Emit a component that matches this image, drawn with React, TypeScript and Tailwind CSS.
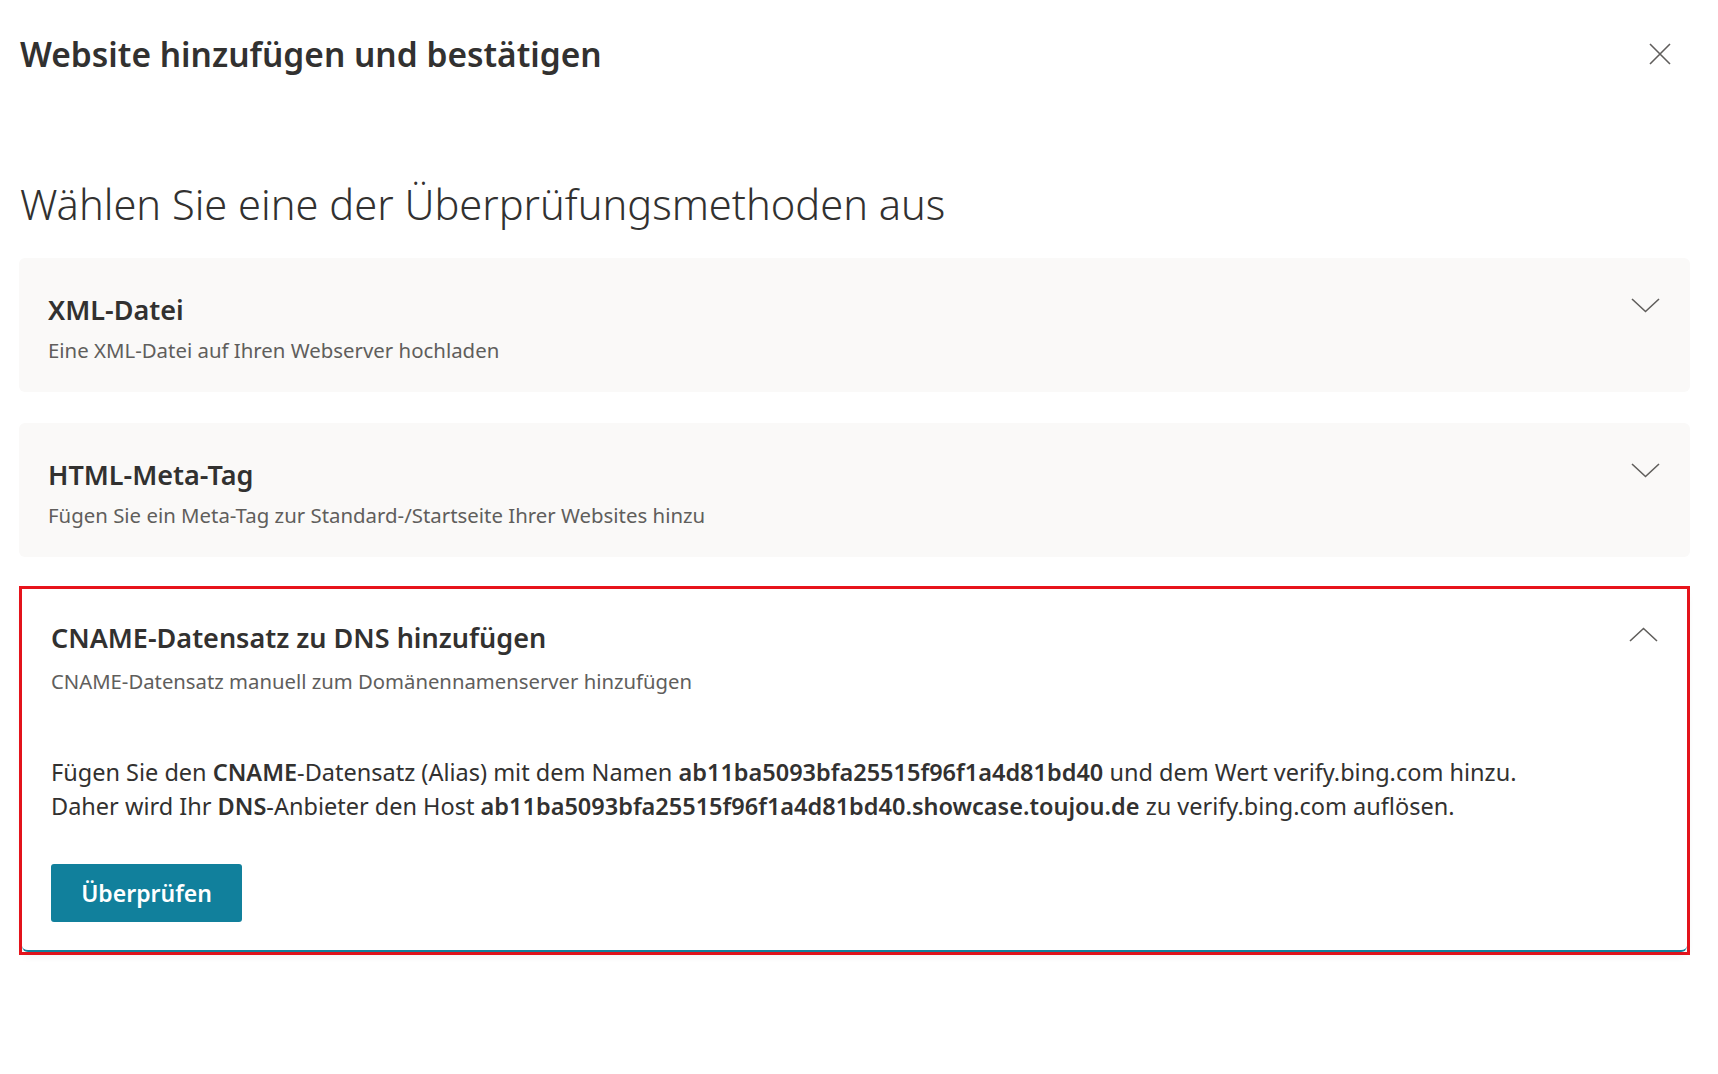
import React from 'react';

const Chevron: React.FC<{ up?: boolean }> = ({ up }) => (
  <svg width="29" height="15" viewBox="0 0 29 15" fill="none" className="shrink-0">
    <path
      d={up ? 'M1 14L14.5 1.5L28 14' : 'M1 1L14.5 13.5L28 1'}
      stroke="#605e5c"
      strokeWidth="1.6"
    />
  </svg>
);

const MethodCard: React.FC<{ title: string; subtitle: string }> = ({ title, subtitle }) => (
  <div className="flex items-start justify-between rounded-md bg-[#faf9f8] pl-[29px] pr-[30px] pt-[35px] pb-[29px]">
    <div className="flex flex-col gap-[11px]">
      <h3 className="text-[27px] leading-[33px] font-semibold text-[#323130]">{title}</h3>
      <p className="text-[20.4px] leading-[26px] text-[#605e5c]">{subtitle}</p>
    </div>
    <div className="mt-[5px]">
      <Chevron />
    </div>
  </div>
);

const App: React.FC = () => {
  return (
    <div className="min-h-screen bg-white pl-[19px] pr-[28px] pt-[34px] font-['Noto_Sans',sans-serif] text-[#323130]">
      {/* Header */}
      <div className="flex items-center justify-between pl-px pr-[18px]">
        <h1 className="text-[33.5px] leading-[40px] font-semibold">Website hinzufügen und bestätigen</h1>
        <button aria-label="Schließen" className="flex h-[24px] w-[24px] items-center justify-center">
          <svg width="22" height="22" viewBox="0 0 22 22" fill="none">
            <path d="M1 1L21 21M21 1L1 21" stroke="#605e5c" strokeWidth="1.6" />
          </svg>
        </button>
      </div>

      <h2 className="mt-[102px] pl-px text-[41.6px] leading-[56px] font-light">
        Wählen Sie eine der Überprüfungsmethoden aus
      </h2>

      <div className="mt-[26px] flex flex-col gap-[31px]">
        <MethodCard title="XML-Datei" subtitle="Eine XML-Datei auf Ihren Webserver hochladen" />
        <MethodCard
          title="HTML-Meta-Tag"
          subtitle="Fügen Sie ein Meta-Tag zur Standard-/Startseite Ihrer Websites hinzu"
        />

        {/* Expanded method, highlighted */}
        <div className="-mt-[2px] border-[3px] border-[#e8141c]">
          <div className="rounded-md border-b-2 border-[#11809c] bg-white pl-[29px] pr-[29px] pt-[32px] pb-[28px] shadow-[0_4px_8px_rgba(0,0,0,0.06)]">
            <div className="flex items-start justify-between">
              <div className="flex flex-col gap-[14px]">
                <h3 className="text-[27px] leading-[33px] font-semibold">CNAME-Datensatz zu DNS hinzufügen</h3>
                <p className="text-[20.3px] leading-[26px] text-[#605e5c]">
                  CNAME-Datensatz manuell zum Domänennamenserver hinzufügen
                </p>
              </div>
              <div className="mt-[6px]">
                <Chevron up />
              </div>
            </div>

            <div className="mt-[61px] text-[23.5px] leading-[34px]">
              <p>
                Fügen Sie den <span className="font-semibold">CNAME</span>-Datensatz (Alias) mit dem Namen{' '}
                <span className="font-semibold">ab11ba5093bfa25515f96f1a4d81bd40</span> und dem Wert verify.bing.com
                hinzu.
              </p>
              <p>
                Daher wird Ihr <span className="font-semibold">DNS</span>-Anbieter den Host{' '}
                <span className="font-semibold">ab11ba5093bfa25515f96f1a4d81bd40.showcase.toujou.de</span> zu
                verify.bing.com auflösen.
              </p>
            </div>

            <button className="mt-[41px] h-[58px] w-[191px] rounded-[3px] bg-[#11809c] text-[23px] font-semibold text-white">
              Überprüfen
            </button>
          </div>
        </div>
      </div>
    </div>
  );
};

export default App;
